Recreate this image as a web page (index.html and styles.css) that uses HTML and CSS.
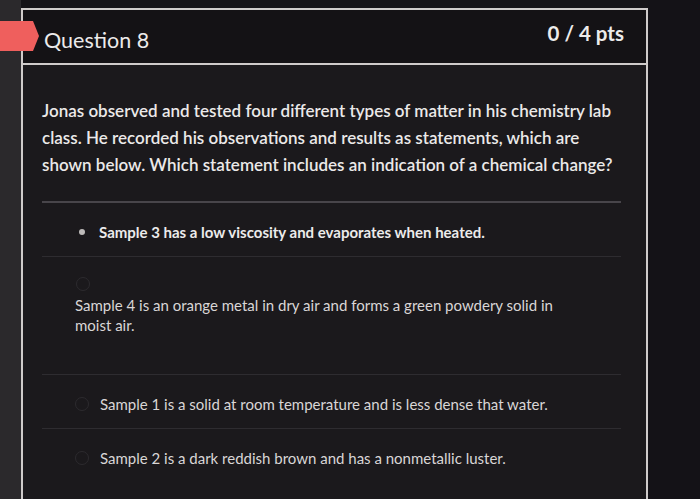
FILE: index.html
```html
<!DOCTYPE html>
<html>
<head>
<meta charset="utf-8">
<link rel="stylesheet" href="styles.css">
</head>
<body>
<div class="page">
  <div class="side"></div>
  <div class="card">
    <div class="tag"></div>
    <div class="header">
      <h2 class="title">Question 8</h2>
      <div class="pts">0 / 4 pts</div>
    </div>
    <div class="content">
      <p class="question">Jonas observed and tested four different types of matter in his chemistry lab class. He recorded his observations and results as statements, which are shown below. Which statement includes an indication of a chemical change?</p>
      <div class="answers">
        <div class="answer selected">
          <span class="radio dot"></span>
          <span class="label">Sample 3 has a low viscosity and evaporates when heated.</span>
        </div>
        <div class="answer stacked">
          <span class="radio"></span>
          <span class="label">Sample 4 is an orange metal in dry air and forms a green powdery solid in moist air.</span>
        </div>
        <div class="answer">
          <span class="radio"></span>
          <span class="label">Sample 1 is a solid at room temperature and is less dense that water.</span>
        </div>
        <div class="answer last">
          <span class="radio"></span>
          <span class="label">Sample 2 is a dark reddish brown and has a nonmetallic luster.</span>
        </div>
      </div>
    </div>
  </div>
  <div class="right"></div>
</div>
</body>
</html>
```
FILE: styles.css
```css
html, body {
  margin: 0;
  padding: 0;
  height: 100%;
  overflow: hidden;
}
body {
  background: #151317;
  font-family: Lato, "Open Sans", sans-serif;
  color: #e6e3e3;
}
.page {
  display: flex;
  height: 499px;
}
.side {
  width: 21px;
  flex: none;
  background: #2b292c;
}
.right {
  flex: 1;
  background: #141217;
}
.card {
  position: relative;
  width: 623px;
  flex: none;
  margin-top: 8px;
  border: 2px solid #cfcbca;
  border-bottom: none;
  background: #1b191c;
}
.tag {
  position: absolute;
  left: -23px;
  top: 11px;
  width: 33px;
  height: 30px;
  background: #ef5f5d;
}
.tag::after {
  content: "";
  position: absolute;
  left: 33px;
  top: 0;
  border-top: 15px solid transparent;
  border-bottom: 15px solid transparent;
  border-left: 6px solid #ef5f5d;
}
.header {
  height: 53px;
  display: flex;
  align-items: center;
  justify-content: space-between;
  padding: 0 22px 0 21px;
  background: #141215;
  border-bottom: 2px solid #cfcbca;
}
.title {
  margin: 7px 0 0 0;
  font-size: 21.5px;
  font-weight: 400;
  color: #ecebeb;
}
.pts {
  margin-bottom: 8px;
  font-size: 20.5px;
  font-weight: 700;
  color: #ecebeb;
}
.content {
  padding: 32px 25px 0 19px;
}
.question {
  margin: 0;
  font-size: 17px;
  line-height: 27px;
  font-weight: 600;
  color: #ebe9e9;
}
.answers {
  margin-top: 23px;
  border-top: 2px solid #48454a;
}
.answer {
  display: flex;
  align-items: center;
  height: 54px;
  box-sizing: border-box;
  padding: 4px 0 0 33px;
  border-bottom: 1px solid #2e2c30;
  font-size: 15px;
  color: #d9d6d6;
}
.answer.last {
  border-bottom: none;
}
.radio {
  width: 12px;
  height: 12px;
  flex: none;
  border-radius: 50%;
  border: 1px solid #2c2a2e;
  margin: 0 11px 0 0;
}
.radio.dot {
  width: 6px;
  height: 6px;
  margin: 0 14px 0 4px;
  border: none;
  background: #bdbab9;
}
.selected {
  font-weight: 700;
  color: #ecebeb;
}
.stacked {
  display: block;
  height: 118px;
  padding-left: 33px;
  padding-top: 20px;
}
.stacked .radio {
  display: block;
  margin: 0 0 0 1px;
}
.stacked .label {
  display: block;
  width: 500px;
  margin-top: 4px;
  line-height: 20px;
}
```
